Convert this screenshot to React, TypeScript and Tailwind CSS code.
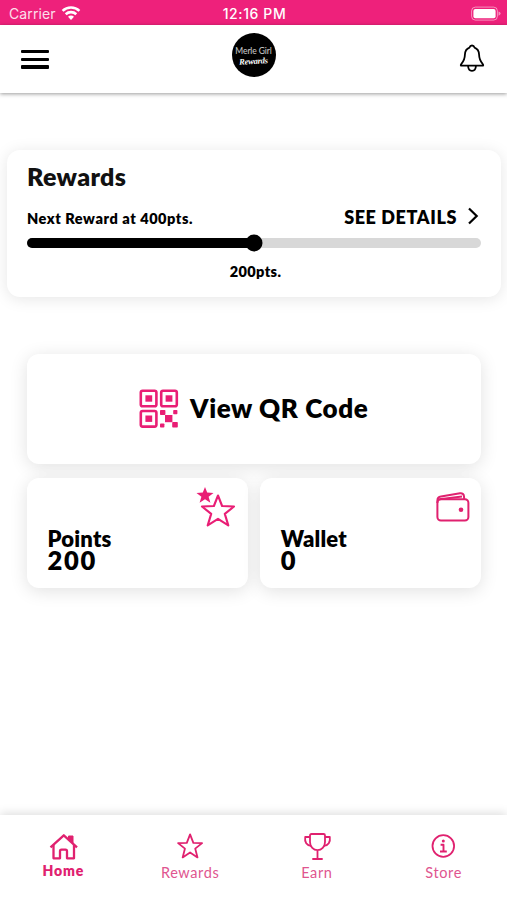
import type { ReactNode } from "react";

const POINTS = 200;
const NEXT_REWARD = 400;
const STAR = "M12 1.2 L15 9 L23 9.3 L16.7 14.3 L18.8 22.4 L12 17.8 L5.2 22.4 L7.3 14.3 L1 9.3 L9 9 Z";

function StatusBar() {
  return (
    <div className="flex h-[25px] shrink-0 items-center justify-between bg-[#ee217b] pt-[2px] pr-[6px] pl-[8px] font-[Inter,sans-serif] text-white">
      <div className="flex w-[120px] items-center gap-[5px] pl-[1px]">
        <span className="text-[14px] tracking-[0.1px] opacity-85">Carrier</span>
        <svg className="-mt-[2px]" width="20" height="16" viewBox="0 0 20 16" fill="none" stroke="white" strokeWidth="2.6">
          <path d="M1.6 5.9C6.3 1.4 13.7 1.4 18.4 5.9" />
          <path d="M4.7 9.2C7.7 6.4 12.3 6.4 15.3 9.2" />
          <path d="M7 11.7C8.7 10.2 11.3 10.2 13 11.7L10 14.9Z" fill="white" stroke="none" />
        </svg>
      </div>
      <span className="text-[14px] font-medium tracking-[0.6px]">12:16 PM</span>
      <div className="flex w-[120px] justify-end">
        <svg width="31" height="16" viewBox="0 0 31 16">
          <rect x="1.6" y="1.1" width="25.8" height="13" rx="3.8" fill="none" stroke="white" strokeOpacity="0.5" />
          <rect x="3.4" y="2.9" width="22.2" height="9.4" rx="2" fill="white" />
          <path d="M28.5 5.5Q30.6 6.2 30.6 7.6T28.5 9.7Z" fill="white" fillOpacity="0.5" />
        </svg>
      </div>
    </div>
  );
}

function Header() {
  return (
    <header className="flex h-[68px] shrink-0 items-start justify-between bg-white pr-[21px] pl-[21px] shadow-[0_1px_4px_rgba(0,0,0,0.4)]">
      <button aria-label="Menu" className="mt-[25px] flex w-[44px] flex-col gap-[4.4px]">
        <span className="h-[3.3px] w-[28px] rounded-[1px] bg-black" />
        <span className="h-[3.3px] w-[28px] rounded-[1px] bg-black" />
        <span className="h-[3.3px] w-[28px] rounded-[1px] bg-black" />
      </button>
      <div className="mt-[8px] flex size-[44px] flex-col items-center justify-center rounded-full bg-black whitespace-nowrap text-white">
        <span className="pt-[1px] text-[8.5px] leading-[10px] tracking-[-0.1px] opacity-80">Merle Girl</span>
        <span className="-rotate-3 font-['Liberation_Serif',cursive] text-[8.5px] leading-[10px] font-bold tracking-[-0.2px] italic">Rewards</span>
      </div>
      <button aria-label="Notifications" className="mt-[18px] flex w-[44px] justify-end">
        <svg width="28" height="30" viewBox="0 0 28 30" fill="none" stroke="black" strokeWidth="1.8" strokeLinejoin="round">
          <path d="M14 2.5C12.7 2.5 11.9 3.3 11.5 4.6C8.3 5.7 7 8.4 6.9 11.8C6.8 16 6 18 3.4 20.8C2.4 22 2.6 22.7 3.8 22.7H24.2C25.4 22.7 25.6 22 24.6 20.8C22 18 21.2 16 21.1 11.8C21 8.4 19.7 5.7 16.5 4.6C16.1 3.3 15.3 2.5 14 2.5Z" />
          <path d="M10.1 23C10.2 26 11.9 27.8 14 27.8S17.8 26 17.9 23" />
        </svg>
      </button>
    </header>
  );
}

function RewardsCard() {
  const progress = (POINTS / NEXT_REWARD) * 100;

  return (
    <section className="mt-[57px] mr-[6px] ml-[7px] h-[147px] shrink-0 rounded-[13px] bg-white px-[20px] pt-[13px] shadow-[0_2px_16px_rgba(0,0,0,0.1)]">
      <h2 className="text-[25px] leading-[26px] font-extrabold tracking-[0.35px] text-[#111]">Rewards</h2>
      <div className="mt-[13px] flex h-[30px] items-center justify-between">
        <span className="pt-[3px] text-[14.5px] font-extrabold tracking-[0.55px]">Next Reward at {NEXT_REWARD}pts.</span>
        <button className="flex items-center gap-[10px] pr-[2px] text-[18px] font-extrabold tracking-[0.6px]">
          SEE DETAILS
          <svg className="-mt-[2px]" width="12" height="18" viewBox="0 0 12 18" fill="none" stroke="black" strokeWidth="2.2">
            <path d="M2 1.5L9.7 9L2 16.5" />
          </svg>
        </button>
      </div>
      <div className="relative mt-[6px] h-[10px] rounded-full bg-[#d8d8d8]">
        <div className="h-full rounded-full bg-black" style={{ width: `${progress}%` }} />
        <div
          className="absolute top-1/2 size-[17px] -translate-x-1/2 -translate-y-1/2 rounded-full bg-black"
          style={{ left: `${progress}%` }}
        />
      </div>
      <p className="mt-[14px] pl-[3px] text-center text-[14.5px] leading-[20px] font-extrabold tracking-[0.35px]">{POINTS}pts.</p>
    </section>
  );
}

function QrIcon() {
  return (
    <svg width="40" height="40" viewBox="0 0 40 40" fill="#e91e75">
      <g fill="none" stroke="#e91e75" strokeWidth="2.6">
        <rect x="1.8" y="1.8" width="15.6" height="15.4" rx="1.8" />
        <rect x="22.2" y="1.8" width="15.6" height="15.4" rx="1.8" />
        <rect x="1.8" y="22" width="15.6" height="15.6" rx="1.8" />
      </g>
      <rect x="6.4" y="6.3" width="6.8" height="6.4" />
      <rect x="26.6" y="6.3" width="6.8" height="6.4" />
      <rect x="6.4" y="26.5" width="6.8" height="6.4" />
      <rect x="21" y="21" width="5.4" height="5" rx="0.8" />
      <rect x="34.2" y="21" width="4.2" height="4.2" rx="0.8" />
      <rect x="26" y="26" width="7.4" height="7.2" />
      <rect x="21" y="34.4" width="4.4" height="4.2" rx="0.8" />
      <rect x="33.2" y="33" width="5.6" height="5.6" rx="0.8" />
    </svg>
  );
}

function StarsIcon() {
  return (
    <svg width="42" height="44" viewBox="0 0 42 44">
      <path d="M9 1L11.2 6.6L17.5 6.9L12.6 10.7L14.4 16.8L9 13.3L3.6 16.8L5.4 10.7L0.5 6.9L6.8 6.6Z" fill="#e91e75" />
      <path
        d="M22 9.5L26.1 20L38 20.5L28.8 27.9L32.3 39.4L22 32.8L11.7 39.4L15.2 27.9L6 20.5L17.9 20Z"
        fill="none"
        stroke="#e91e75"
        strokeWidth="2.1"
        strokeLinejoin="round"
      />
    </svg>
  );
}

function WalletIcon() {
  return (
    <svg width="34" height="30" viewBox="0 0 34 30" fill="none" stroke="#e0216f" strokeWidth="2" strokeLinejoin="round">
      <rect x="1.4" y="7.2" width="31" height="21.4" rx="3.5" />
      <path d="M1.4 11V8.5C1.4 5.8 2.3 4.8 5 4.4L24 1.3C26.3 .9 27.8 2.2 28 4.3L28.2 7.2M3.5 7.2L26 4.4" />
      <circle cx="25" cy="17.7" r="2.3" fill="#e0216f" stroke="none" />
    </svg>
  );
}

function StatCard({ label, value, icon }: { label: string; value: number; icon: ReactNode }) {
  return (
    <div className="flex h-[110px] flex-1 justify-between rounded-[12px] bg-white pl-[21px] shadow-[0_3px_18px_rgba(0,0,0,0.12)]">
      <div className="pt-[49px] font-extrabold">
        <p className="text-[22px] leading-[24px] tracking-[0.2px]">{label}</p>
        <p className="text-[25.5px] leading-[19px] tracking-[1.7px]">{value}</p>
      </div>
      {icon}
    </div>
  );
}

function Tab({ label, active, children }: { label: string; active?: boolean; children: ReactNode }) {
  return (
    <button className="flex flex-1 flex-col items-center justify-start text-[#e0216f]">
      <svg width="30" height="30" viewBox="0 0 30 30" fill="none" stroke="currentColor" strokeWidth="1.8" strokeLinejoin="round">
        {children}
      </svg>
      <span
        className={
          active
            ? "mt-[1px] text-[14px] leading-[18px] font-extrabold tracking-[0.9px]"
            : "mt-[3px] text-[14.5px] leading-[18px] tracking-[0.6px] text-[#e0558f]"
        }
      >
        {label}
      </span>
    </button>
  );
}

function TabBar() {
  return (
    <nav className="flex h-[85px] shrink-0 bg-white pt-[16px] shadow-[0_-2px_9px_rgba(0,0,0,0.13)]">
      <Tab label="Home" active>
        <g strokeWidth="2.3">
          <path d="M2.5 16.3L15.8 4.3L29 16.3" />
          <path d="M5.5 14V27.3H12V20.3Q12 18.7 13.5 18.7H17.5Q19 18.7 19 20.3V27.3H26V14" />
          <path d="M20.5 5H25V12L20.5 8.5Z" fill="currentColor" strokeWidth="1" />
        </g>
      </Tab>
      <Tab label="Rewards">
        <g transform="translate(2 2) scale(1.09)">
          <path d={STAR} strokeWidth="1.65" />
        </g>
      </Tab>
      <Tab label="Earn">
        <path d="M8 4.5Q8 3 9.5 3H21.5Q23 3 23 4.5V11C23 16 19.5 19.2 15.5 19.2S8 16 8 11ZM15.5 19.2V28M10.3 28H20.7" />
        <path d="M8 6H3.2C2.4 11 4.7 14.7 9.2 14.9M23 6H27.8C28.6 11 26.3 14.7 21.8 14.9" />
      </Tab>
      <Tab label="Store">
        <circle cx="14.3" cy="15" r="10.8" />
        <circle cx="14.3" cy="9.9" r="1.5" fill="currentColor" stroke="none" />
        <path d="M11.6 13.7H14.5V20.3M11 20.5H17.8" strokeWidth="1.9" />
      </Tab>
    </nav>
  );
}

export default function App() {
  return (
    <div className="flex h-[900px] w-[507px] flex-col overflow-hidden bg-white font-[Lato,sans-serif] text-black">
      <StatusBar />
      <Header />
      <RewardsCard />
      <main className="mt-[56.5px] mr-[26px] ml-[26.5px] flex flex-1 flex-col gap-[14px]">
        <button className="flex h-[110px] items-center justify-center gap-[11px] rounded-[12px] bg-white pt-[1px] shadow-[0_3px_18px_rgba(0,0,0,0.12)]">
          <QrIcon />
          <span className="-mt-[1px] text-[26px] font-extrabold tracking-[0.6px]">View QR Code</span>
        </button>
        <div className="flex gap-[12px]">
          <StatCard label="Points" value={POINTS} icon={<div className="pt-[8px] pr-[10px]"><StarsIcon /></div>} />
          <StatCard label="Wallet" value={0} icon={<div className="pt-[14px] pr-[11px]"><WalletIcon /></div>} />
        </div>
      </main>
      <TabBar />
    </div>
  );
}
